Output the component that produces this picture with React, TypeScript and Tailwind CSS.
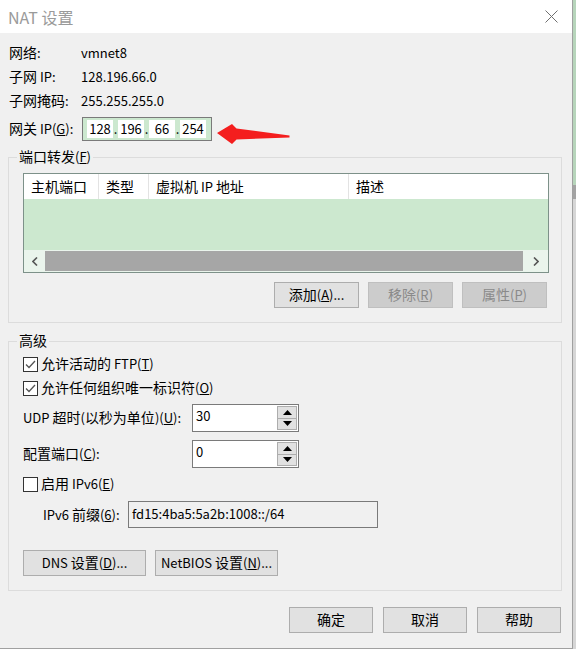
import React from "react";

function T({ s }: { s: string }) {
  const parts = s.split(/([\u3000-\u9fff\uff00-\uffef]+)/);
  return (
    <span>
      {parts.map((p, i) =>
        /[\u3000-\u9fff\uff00-\uffef]/.test(p) ? (
          <span key={i} className="text-[14px] leading-[12px]">
            {p}
          </span>
        ) : (
          <React.Fragment key={i}>{p}</React.Fragment>
        )
      )}
    </span>
  );
}

function Acc({ pre, k, post = "" }: { pre: string; k: string; post?: string }) {
  return (
    <span>
      <T s={pre} />(<u>{k}</u>){post}
    </span>
  );
}

function Btn({ children, w, disabled = false }: { children: React.ReactNode; w: string; disabled?: boolean }) {
  return (
    <div
      className={
        "flex items-center justify-center border h-[26px] " +
        w +
        (disabled ? " bg-[#cccccc] border-[#bfbfbf] text-[#8a8a8a]" : " bg-[#e1e1e1] border-[#adadad] text-black")
      }
    >
      {children}
    </div>
  );
}

function Check({ checked }: { checked: boolean }) {
  return (
    <div className="w-[15px] h-[15px] border border-[#333333] bg-white flex items-center justify-center shrink-0">
      {checked && (
        <svg width="13" height="13" viewBox="0 0 13 13">
          <polyline points="2,6.5 5,9.5 11,3" fill="none" stroke="#555555" strokeWidth="1.3" />
        </svg>
      )}
    </div>
  );
}

function Spin({ value }: { value: string }) {
  return (
    <div className="w-[107px] h-[28px] border border-[#7a7a7a] bg-white flex">
      <div className="flex-1 pl-[3px] pt-[2px] leading-[18px]">{value}</div>
      <div className="w-[20px] my-[1px] mr-[1px] flex flex-col">
        <div className="flex-1 bg-[#e1e1e1] border border-[#adadad] flex items-center justify-center">
          <svg width="9" height="5" viewBox="0 0 9 5">
            <polygon points="0,5 4.5,0 9,5" fill="#000" />
          </svg>
        </div>
        <div className="flex-1 bg-[#e1e1e1] border border-[#adadad] border-t-0 flex items-center justify-center">
          <svg width="9" height="5" viewBox="0 0 9 5">
            <polygon points="0,0 4.5,5 9,0" fill="#000" />
          </svg>
        </div>
      </div>
    </div>
  );
}

function Seg({ v }: { v: string }) {
  return <div className="w-[26px] h-[18px] bg-white flex items-center justify-center leading-[18px]">{v}</div>;
}
function Dot() {
  return <div className="w-[5px] h-[18px] flex items-end justify-center leading-[18px]">.</div>;
}

export default function App() {
  return (
    <div className="flex w-[576px] h-[649px] overflow-hidden text-[13px] text-black font-['Noto_Sans_CJK_SC','Noto_Sans',sans-serif] leading-[16px]">
      <div className="w-[573px] h-[649px] border-r border-b border-[#a0a0a0] bg-[#f0f0f0] flex flex-col shrink-0">
        {/* title bar */}
        <div className="h-[33px] bg-white flex items-center pl-[8px] pr-[14px] shrink-0">
          <span className="text-[16px] text-[#9a9a9a] leading-[20px]">NAT 设置</span>
          <svg className="ml-auto" width="13" height="13" viewBox="0 0 13 13">
            <line x1="0.5" y1="0.5" x2="12.5" y2="12.5" stroke="#6f6f6f" strokeWidth="1" />
            <line x1="12.5" y1="0.5" x2="0.5" y2="12.5" stroke="#6f6f6f" strokeWidth="1" />
          </svg>
        </div>

        <div className="flex flex-col pl-[8px] pr-[10px] pt-[8px]">
          {/* info rows */}
          <div className="flex h-[24px] items-center pl-[1px]">
            <span className="w-[72px]">
              <T s="网络:" />
            </span>
            <span>vmnet8</span>
          </div>
          <div className="flex h-[24px] items-center pl-[1px]">
            <span className="w-[72px]">
              <T s="子网 IP:" />
            </span>
            <span>128.196.66.0</span>
          </div>
          <div className="flex h-[24px] items-center pl-[1px]">
            <span className="w-[72px]">
              <T s="子网掩码:" />
            </span>
            <span>255.255.255.0</span>
          </div>
          <div className="relative flex h-[24px] items-center pl-[1px] mt-[4px]">
            <span className="w-[73px]">
              <Acc pre="网关 IP" k="G" post=":" />
            </span>
            <div className="w-[130px] h-[24px] border border-[#7a7a7a] bg-[#cce8cf] flex items-center pl-[4px]">
              <Seg v="128" />
              <Dot />
              <Seg v="196" />
              <Dot />
              <Seg v="66" />
              <Dot />
              <Seg v="254" />
            </div>
            <svg className="absolute left-[207px] top-[4px]" width="80" height="24" viewBox="215 121 80 24">
              <polygon points="217,133 232,124 236.5,128.5 289.5,135.5 289.5,137.5 236.5,139.5 232,144" fill="#f41e1e" />
            </svg>
          </div>

          {/* port forwarding */}
          <fieldset className="border border-[#dcdcdc] mt-[8px] p-0 m-0 min-w-0">
            <legend className="ml-[8px] px-[2px] leading-[16px]">
              <Acc pre="端口转发" k="F" />
            </legend>
            <div className="pl-[14px] pr-[13px] pt-[8px] pb-[14px] flex flex-col">
              <div className="w-[526px] border border-[#7d9189] flex flex-col">
                <div className="h-[25px] bg-white flex items-center">
                  <div className="w-[75px] h-full border-r border-[#e3e3e3] flex items-center pl-[7px]">
                    <T s="主机端口" />
                  </div>
                  <div className="w-[50px] h-full border-r border-[#e3e3e3] flex items-center pl-[7px]">
                    <T s="类型" />
                  </div>
                  <div className="w-[200px] h-full border-r border-[#e3e3e3] flex items-center pl-[7px]">
                    <T s="虚拟机 IP 地址" />
                  </div>
                  <div className="flex-1 h-full flex items-center pl-[7px]">
                    <T s="描述" />
                  </div>
                </div>
                <div className="h-[51px] bg-[#cce8cf]" />
                <div className="h-[22px] bg-[#eaf4ec] flex">
                  <div className="w-[21px] flex items-center justify-center">
                    <svg width="6" height="9" viewBox="0 0 6 9">
                      <polyline points="5,0.5 1,4.5 5,8.5" fill="none" stroke="#555" strokeWidth="1.6" />
                    </svg>
                  </div>
                  <div className="flex-1 bg-[#a6a6a6] my-[1px]" />
                  <div className="w-[25px] flex items-center justify-center">
                    <svg width="6" height="9" viewBox="0 0 6 9">
                      <polyline points="1,0.5 5,4.5 1,8.5" fill="none" stroke="#555" strokeWidth="1.6" />
                    </svg>
                  </div>
                </div>
              </div>
              <div className="mt-[9px] flex justify-end gap-[9px] mr-[1px]">
                <Btn w="w-[85px]">
                  <Acc pre="添加" k="A" post="..." />
                </Btn>
                <Btn w="w-[85px]" disabled>
                  <Acc pre="移除" k="R" />
                </Btn>
                <Btn w="w-[85px]" disabled>
                  <Acc pre="属性" k="P" />
                </Btn>
              </div>
            </div>
          </fieldset>

          {/* advanced */}
          <fieldset className="border border-[#dcdcdc] mt-[10px] p-0 m-0 min-w-0">
            <legend className="ml-[8px] px-[2px] leading-[16px]">
              <T s="高级" />
            </legend>
            <div className="pl-[14px] pt-[3px] pb-[14px] flex flex-col">
              <div className="flex h-[24px] items-center">
                <Check checked />
                <span className="ml-[3px]">
                  <Acc pre="允许活动的 FTP" k="T" />
                </span>
              </div>
              <div className="flex h-[24px] items-center">
                <Check checked />
                <span className="ml-[3px]">
                  <Acc pre="允许任何组织唯一标识符" k="O" />
                </span>
              </div>
              <div className="flex h-[28px] items-center mt-[4px]">
                <span className="w-[169px]">
                  <Acc pre="UDP 超时(以秒为单位)" k="U" post=":" />
                </span>
                <Spin value="30" />
              </div>
              <div className="flex h-[28px] items-center mt-[8px]">
                <span className="w-[169px]">
                  <Acc pre="配置端口" k="C" post=":" />
                </span>
                <Spin value="0" />
              </div>
              <div className="flex h-[24px] items-center mt-[4px]">
                <Check checked={false} />
                <span className="ml-[3px]">
                  <Acc pre="启用 IPv6" k="E" />
                </span>
              </div>
              <div className="flex h-[27px] items-center mt-[5px] pl-[20px]">
                <span className="w-[85px]">
                  <Acc pre="IPv6 前缀" k="6" post=":" />
                </span>
                <div className="w-[250px] h-[27px] border border-[#7a7a7a] bg-[#f0f0f0] pl-[3px] pt-[3px] leading-[18px]">
                  fd15:4ba5:5a2b:1008::/64
                </div>
              </div>
              <div className="flex gap-[9px] mt-[22px]">
                <Btn w="w-[123px]">
                  <Acc pre="DNS 设置" k="D" post="..." />
                </Btn>
                <Btn w="w-[123px]">
                  <Acc pre="NetBIOS 设置" k="N" post="..." />
                </Btn>
              </div>
            </div>
          </fieldset>

          <div className="flex justify-end gap-[10px] mr-[1px] mt-[16px]">
            <Btn w="w-[84px]">
              <T s="确定" />
            </Btn>
            <Btn w="w-[84px]">
              <T s="取消" />
            </Btn>
            <Btn w="w-[84px]">
              <T s="帮助" />
            </Btn>
          </div>
        </div>
      </div>
      <div className="w-[3px] flex flex-col shrink-0">
        <div className="h-[185px] bg-[#b7d5bb]" />
        <div className="h-[14px] bg-[#a3a3a3]" />
        <div className="flex-1 bg-[#d6d6d6]" />
      </div>
    </div>
  );
}
